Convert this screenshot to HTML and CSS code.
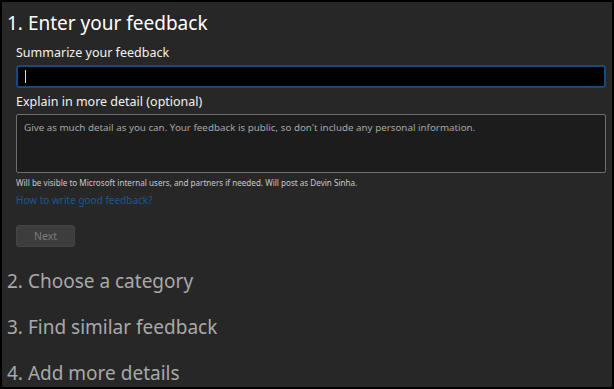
FILE: index.html
```html
<!DOCTYPE html>
<html lang="en">

<head>
  <meta charset="UTF-8" />
  <title>Feedback Hub</title>
  <link rel="stylesheet" href="styles.css">
</head>

<body>
  <div class="frame">
    <div class="steps">
      <section class="step active">
        <h2>1. Enter your feedback</h2>
        <div class="form">
          <label class="field-label">Summarize your feedback</label>
          <div class="summary-input"><span class="caret"></span></div>

          <label class="field-label">Explain in more detail (optional)</label>
          <div class="detail-input">Give as much detail as you can. Your feedback is public, so don't include any personal information.</div>

          <p class="visibility">Will be visible to Microsoft internal users, and partners if needed. Will post as Devin Sinha.</p>
          <a class="help-link" href="#">How to write good feedback?</a>

          <button class="next-btn" disabled>Next</button>
        </div>
      </section>

      <section class="step">
        <h2>2. Choose a category</h2>
      </section>
      <section class="step">
        <h2>3. Find similar feedback</h2>
      </section>
      <section class="step">
        <h2>4. Add more details</h2>
      </section>
    </div>
  </div>
</body>

</html>
```

FILE: styles.css
```css
/* Feedback Hub dark step list */

html,
body {
  margin: 0;
  padding: 0;
  background-color: #000000;
}

body {
  font-family: 'Noto Sans', 'Open Sans', sans-serif;
  color: #e6e6e6;
}

.frame {
  margin: 2px 2px 0 2px;
  height: 385px;
  background-color: #272727;
  overflow: hidden;
}

.steps {
  padding: 7px 0 0 5px;
}

.step h2 {
  margin: 0;
  font-size: 19px;
  font-weight: 400;
  line-height: 28px;
  color: #a9a9a9;
}

.step.active h2 {
  color: #ffffff;
}

.step + .step {
  margin-top: 18px;
}

.form {
  display: flex;
  flex-direction: column;
  align-items: flex-start;
  padding: 7px 6px 0 9px;
}

.field-label {
  font-size: 12.5px;
  line-height: 18px;
  color: #f2f2f2;
}

.summary-input {
  box-sizing: border-box;
  width: 100%;
  height: 23px;
  margin: 3px 0 5px;
  padding: 3px 7px;
  background-color: #000000;
  border: 2px solid #16497c;
  border-radius: 3px;
}

.caret {
  display: block;
  width: 1px;
  height: 13px;
  background-color: #e0e0e0;
}

.detail-input {
  box-sizing: border-box;
  width: 100%;
  height: 59px;
  margin-top: 3px;
  padding: 5px 7px;
  background-color: #1c1c1c;
  border: 1px solid #6e6e6e;
  border-radius: 2px;
  font-size: 9.8px;
  line-height: 16px;
  color: #a6a6a6;
}

.visibility {
  margin: 3px 0 0;
  font-size: 8.1px;
  line-height: 14px;
  color: #c8c8c8;
}

.help-link {
  margin-top: 3px;
  font-size: 10px;
  line-height: 14px;
  color: #1a5894;
  text-decoration: none;
}

.next-btn {
  margin-top: 18px;
  width: 59px;
  height: 22px;
  padding: 0;
  font-family: inherit;
  font-size: 10.5px;
  color: #7c7c7c;
  background-color: #3d3d3d;
  border: 1px solid #454545;
  border-radius: 3px;
}

.step.active + .step {
  margin-top: 20px;
}
```
